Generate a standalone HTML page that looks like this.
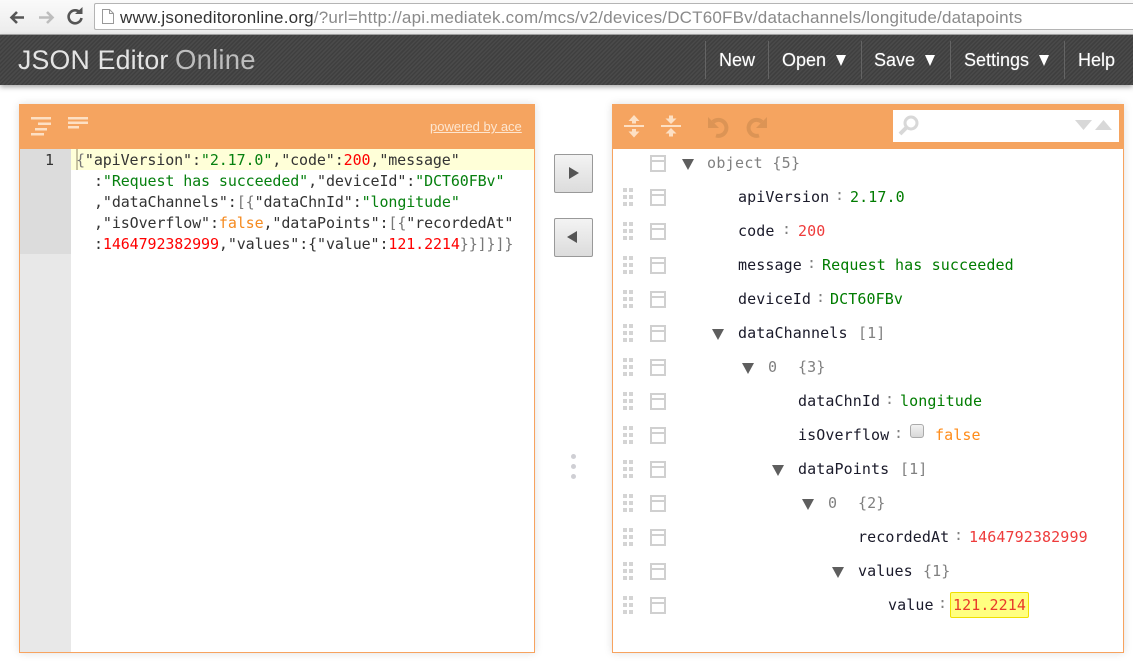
<!DOCTYPE html>
<html><head><meta charset="utf-8">
<style>
html,body{margin:0;padding:0;background:#fff;}
body{width:1133px;height:666px;overflow:hidden;position:relative;font-family:"Liberation Sans",sans-serif;}
.a{position:absolute;white-space:pre;}
#chrome{position:absolute;left:0;top:0;width:1133px;height:34px;background:linear-gradient(#fafafa,#ececec);border-bottom:1px solid #a8a8a8;}
#url{position:absolute;left:94px;top:3px;width:1039px;height:25px;background:#fff;border:1px solid #b4b4b4;border-right:none;border-radius:2px 0 0 2px;box-sizing:content-box;}
#urltxt{left:120px;top:8px;font-size:17px;line-height:19px;color:#8a8a8a;letter-spacing:.2px;}
#urltxt b{font-weight:normal;color:#333;}
#hdr{position:absolute;left:0;top:35px;width:1133px;height:50px;background:#464646 repeating-linear-gradient(135deg,#4a4a4a 0,#4a4a4a 1.5px,#3f3f3f 1.5px,#3f3f3f 3px);box-shadow:0 2px 5px rgba(0,0,0,.35);}
.sep{position:absolute;top:41px;width:1px;height:38px;background:#646464;}
.mi{position:absolute;top:50px;font-size:18px;line-height:20px;color:#fff;white-space:pre;text-shadow:0 0 1px rgba(255,255,255,.5);}
.ma{position:absolute;top:55px;width:0;height:0;border-left:5.5px solid transparent;border-right:5.5px solid transparent;border-top:11px solid #fff;}
.pn{position:absolute;box-sizing:border-box;border:1px solid #f7a35f;background:#fff;box-shadow:0 0 8px rgba(0,0,0,.13);}
.bar{position:absolute;background:#f5a460;}
.mono{font-family:"DejaVu Sans Mono","Liberation Mono",monospace;font-size:15px;line-height:21px;}
.l{position:absolute;left:94px;color:#333;letter-spacing:-.11px;white-space:pre;}
.s{color:#06800f;}.n{color:#f00;}.b{color:#f58a1f;}.g{color:#777;}
.r{position:absolute;font-family:"DejaVu Sans Mono","Liberation Mono",monospace;font-size:15px;line-height:20px;color:#1a1a2a;letter-spacing:.1px;white-space:pre;}
.gr{color:#808080;}.str{color:#007c00;}.num{color:#ee3b3b;}.bl{color:#ff8c1a;}
.c{color:#808080;margin-top:-2px;}
.ic{position:absolute;left:650px;width:12px;height:13px;border:2px solid #d0d0d0;background:linear-gradient(#d0d0d0,#d0d0d0) 0 3px/100% 2px no-repeat;}
.tr{position:absolute;width:0;height:0;border-left:6px solid transparent;border-right:6px solid transparent;border-top:11px solid #5e5e5e;}
.btn{position:absolute;left:554px;width:37px;height:37px;border:1px solid #999;border-radius:2px;background:linear-gradient(#f3f3f3,#dcdcdc);}
</style></head><body>

<div id="chrome"></div>
<svg class="a" style="left:0;top:0" width="94" height="34" viewBox="0 0 94 34">
<path d="M24 17.500H12M17 12L11.500 17.500l5.500 5.500" fill="none" stroke="#555" stroke-width="2.600"/>
<path d="M39 17.500H52M47 12L52.500 17.500 47 23" fill="none" stroke="#bdbdbd" stroke-width="2.600"/>
<path d="M80 12.500A6.500 6.500 0 1 0 81.500 18" fill="none" stroke="#555" stroke-width="2.600"/>
<path d="M75 14h7.500V7z" fill="#555"/>
</svg>
<div id="url"></div>
<svg class="a" style="left:101px;top:8px" width="14" height="17" viewBox="0 0 14 17"><path d="M1.500 1.500h7l4 4v10h-11zM8.500 1.500v4h4" fill="#fff" stroke="#999" stroke-width="1"/></svg>
<div class="a" id="urltxt"><b>www.jsoneditoronline.org</b>/?url=http://api.mediatek.com/mcs/v2/devices/DCT60FBv/datachannels/longitude/datapoints</div>

<div id="hdr"></div>
<div class="a" style="left:18px;top:42px;font-size:26.700px;line-height:36px;color:#e4e4e4;letter-spacing:.2px;">JSON Editor</div>
<div class="a" style="left:175px;top:42px;font-size:27.500px;line-height:36px;color:#bdbdbd;letter-spacing:.2px;font-weight:normal;">Online</div>
<div class="sep" style="left:705px"></div><div class="sep" style="left:768px"></div><div class="sep" style="left:861px"></div><div class="sep" style="left:950px"></div><div class="sep" style="left:1064px"></div>
<div class="mi" style="left:719px">New</div>
<div class="mi" style="left:782px">Open</div><div class="ma" style="left:836px"></div>
<div class="mi" style="left:874px">Save</div><div class="ma" style="left:925px"></div>
<div class="mi" style="left:964px">Settings</div><div class="ma" style="left:1039px"></div>
<div class="mi" style="left:1078px">Help</div>

<!-- left panel -->
<div class="pn" style="left:19px;top:104px;width:516px;height:549px;"></div>
<div class="bar" style="left:19px;top:104px;width:516px;height:45px;"></div>
<svg class="a" style="left:28px;top:114px" width="64" height="24" viewBox="0 0 64 24">
<g fill="#fde0c4"><rect x="3" y="3" width="20" height="2.500"/><rect x="10" y="8.500" width="13" height="2.500"/><rect x="7" y="14" width="12" height="2.500"/><rect x="3" y="19" width="13" height="2.500"/>
<rect x="40" y="3" width="20" height="2.500"/><rect x="40" y="7.500" width="20" height="2.500"/><rect x="40" y="12" width="11" height="2.500"/></g></svg>
<div class="a" style="left:430px;top:118px;font-size:13px;line-height:17px;color:#fde6d0;text-decoration:underline;">powered by ace</div>
<div class="a" style="left:20px;top:149px;width:51px;height:503px;background:#e8e8e8;"></div>
<div class="a" style="left:20px;top:149px;width:51px;height:105px;background:#dcdcdc;"></div>
<div class="a" style="left:71px;top:149px;width:463px;height:21px;background:#ffffd8;"></div>
<div class="a" style="left:76px;top:149px;width:2px;height:21px;background:#c8c4a0;"></div>
<div class="a mono" style="left:45px;top:150px;color:#333;">1</div>
<div class="mono">
<div class="l" style="top:150px;left:76px"><span class="g">{</span>"apiVersion":<span class="s">"2.17.0"</span>,"code":<span class="n">200</span>,"message"</div>
<div class="l" style="top:171px">:<span class="s">"Request has succeeded"</span>,"deviceId":<span class="s">"DCT60FBv"</span></div>
<div class="l" style="top:192px">,"dataChannels":<span class="g">[{</span>"dataChnId":<span class="s">"longitude"</span></div>
<div class="l" style="top:213px">,"isOverflow":<span class="b">false</span>,"dataPoints":<span class="g">[{</span>"recordedAt"</div>
<div class="l" style="top:234px">:<span class="n">1464792382999</span>,"values":{"value":<span class="n">121.2214</span><span class="g">}}]}]}</span></div>
</div>

<!-- middle -->
<div class="btn" style="top:154px"><div class="a" style="left:14px;top:12px;border-left:10px solid #555;border-top:6px solid transparent;border-bottom:6px solid transparent;"></div></div>
<div class="btn" style="top:218px"><div class="a" style="left:12px;top:12px;border-right:10px solid #555;border-top:6px solid transparent;border-bottom:6px solid transparent;"></div></div>
<div class="a" style="left:571px;top:454px;width:5px;height:5px;border-radius:50%;background:#cfcfd4;"></div>
<div class="a" style="left:571px;top:464px;width:5px;height:5px;border-radius:50%;background:#cfcfd4;"></div>
<div class="a" style="left:571px;top:474px;width:5px;height:5px;border-radius:50%;background:#cfcfd4;"></div>

<!-- right panel -->
<div class="pn" style="left:612px;top:104px;width:512px;height:549px;"></div>
<div class="bar" style="left:612px;top:104px;width:512px;height:45px;"></div>
<svg class="a" style="left:620px;top:110px" width="150" height="32" viewBox="620 110 150 32">
<g fill="#fde0c4"><rect x="624" y="125" width="20" height="2"/>
<path d="M634 115l5.500 6h-3.500v2.500h-4v-2.500h-3.500zM634 137.500l5.500-6h-3.500v-2.500h-4v2.500h-3.500z"/>
<rect x="661" y="125" width="20" height="2"/>
<path d="M671 124l5.500-5.500h-3.500v-3h-4v3h-3.500zM671 128l5.500 5.500h-3.500v3h-4v-3h-3.500z"/></g>
<g fill="none" stroke="#dc9455" stroke-width="4"><path d="M713 122A8 8 0 1 1 716 135.500"/><path d="M762 122A8 8 0 1 0 759 135.500"/></g>
<path d="M708 117v11h11zM767 117v11h-11z" fill="#dc9455"/>
</svg>
<div class="a" style="left:893px;top:110px;width:226px;height:32px;background:#fff;"></div>
<svg class="a" style="left:893px;top:110px" width="226" height="32" viewBox="0 0 226 32">
<circle cx="18" cy="13" r="6" fill="none" stroke="#d8d8d8" stroke-width="3"/><path d="M13 18l-6 6" stroke="#d8d8d8" stroke-width="4"/>
<path d="M182 10h17l-8.500 10z" fill="#d8d8d8"/><path d="M202 20h17l-8.500-10z" fill="#d8d8d8"/></svg>

<i class="ic" style="top:155px"></i><i class="ic" style="top:189px"></i><i class="ic" style="top:223px"></i><i class="ic" style="top:257px"></i><i class="ic" style="top:291px"></i><i class="ic" style="top:325px"></i><i class="ic" style="top:359px"></i><i class="ic" style="top:393px"></i><i class="ic" style="top:427px"></i><i class="ic" style="top:461px"></i><i class="ic" style="top:495px"></i><i class="ic" style="top:529px"></i><i class="ic" style="top:563px"></i><i class="ic" style="top:597px"></i>

<svg class="a" style="left:623px;top:180px" width="12" height="440" viewBox="0 0 12 440"><defs><g id="d" fill="#d4d4d4"><rect x="0" y="8" width="4" height="4"/><rect x="6" y="8" width="4" height="4"/><rect x="0" y="15" width="4" height="4"/><rect x="6" y="15" width="4" height="4"/><rect x="0" y="22" width="4" height="4"/><rect x="6" y="22" width="4" height="4"/></g></defs>
<use href="#d" y="0"/><use href="#d" y="34"/><use href="#d" y="68"/><use href="#d" y="102"/><use href="#d" y="136"/><use href="#d" y="170"/><use href="#d" y="204"/><use href="#d" y="238"/><use href="#d" y="272"/><use href="#d" y="306"/><use href="#d" y="340"/><use href="#d" y="374"/><use href="#d" y="408"/></svg>

<div class="tr" style="left:682px;top:159px"></div>
<div class="tr" style="left:712px;top:329px"></div>
<div class="tr" style="left:742px;top:363px"></div>
<div class="tr" style="left:772px;top:465px"></div>
<div class="tr" style="left:802px;top:499px"></div>
<div class="tr" style="left:832px;top:567px"></div>

<div class="r gr" style="left:707px;top:153px;letter-spacing:.3px">object {5}</div>

<div class="r" style="left:738px;top:187px">apiVersion</div><div class="r c" style="left:835px;top:187px">:</div><div class="r str" style="left:850px;top:187px">2.17.0</div>
<div class="r" style="left:738px;top:221px">code</div><div class="r c" style="left:782px;top:221px">:</div><div class="r num" style="left:798px;top:221px">200</div>
<div class="r" style="left:738px;top:255px">message</div><div class="r c" style="left:807px;top:255px">:</div><div class="r str" style="left:822px;top:255px">Request has succeeded</div>
<div class="r" style="left:738px;top:289px">deviceId</div><div class="r c" style="left:816px;top:289px">:</div><div class="r str" style="left:830px;top:289px">DCT60FBv</div>
<div class="r" style="left:738px;top:323px">dataChannels</div><div class="r gr" style="left:858px;top:323px">[1]</div>
<div class="r gr" style="left:768px;top:357px">0</div><div class="r gr" style="left:798px;top:357px">{3}</div>
<div class="r" style="left:798px;top:391px">dataChnId</div><div class="r c" style="left:885px;top:391px">:</div><div class="r str" style="left:900px;top:391px">longitude</div>
<div class="r" style="left:798px;top:425px">isOverflow</div><div class="r c" style="left:894px;top:425px">:</div>
<div class="a" style="left:910px;top:424px;width:12px;height:12px;border:1px solid #aaa;border-radius:3px;background:linear-gradient(#f2f2f2,#d8d8d8);"></div>
<div class="r bl" style="left:935px;top:425px">false</div>
<div class="r" style="left:798px;top:459px">dataPoints</div><div class="r gr" style="left:900px;top:459px">[1]</div>
<div class="r gr" style="left:828px;top:493px">0</div><div class="r gr" style="left:858px;top:493px">{2}</div>
<div class="r" style="left:858px;top:527px">recordedAt</div><div class="r c" style="left:954px;top:527px">:</div><div class="r num" style="left:969px;top:527px">1464792382999</div>
<div class="r" style="left:858px;top:561px">values</div><div class="r gr" style="left:923px;top:561px">{1}</div>
<div class="a" style="left:950px;top:592px;width:77px;height:24px;background:#ffff80;border:1px solid #f0e000;border-radius:2px;"></div>
<div class="r" style="left:888px;top:595px">value</div><div class="r c" style="left:938px;top:595px">:</div><div class="r num" style="left:953px;top:595px;color:#e83a2a">121.2214</div>

</body></html>
